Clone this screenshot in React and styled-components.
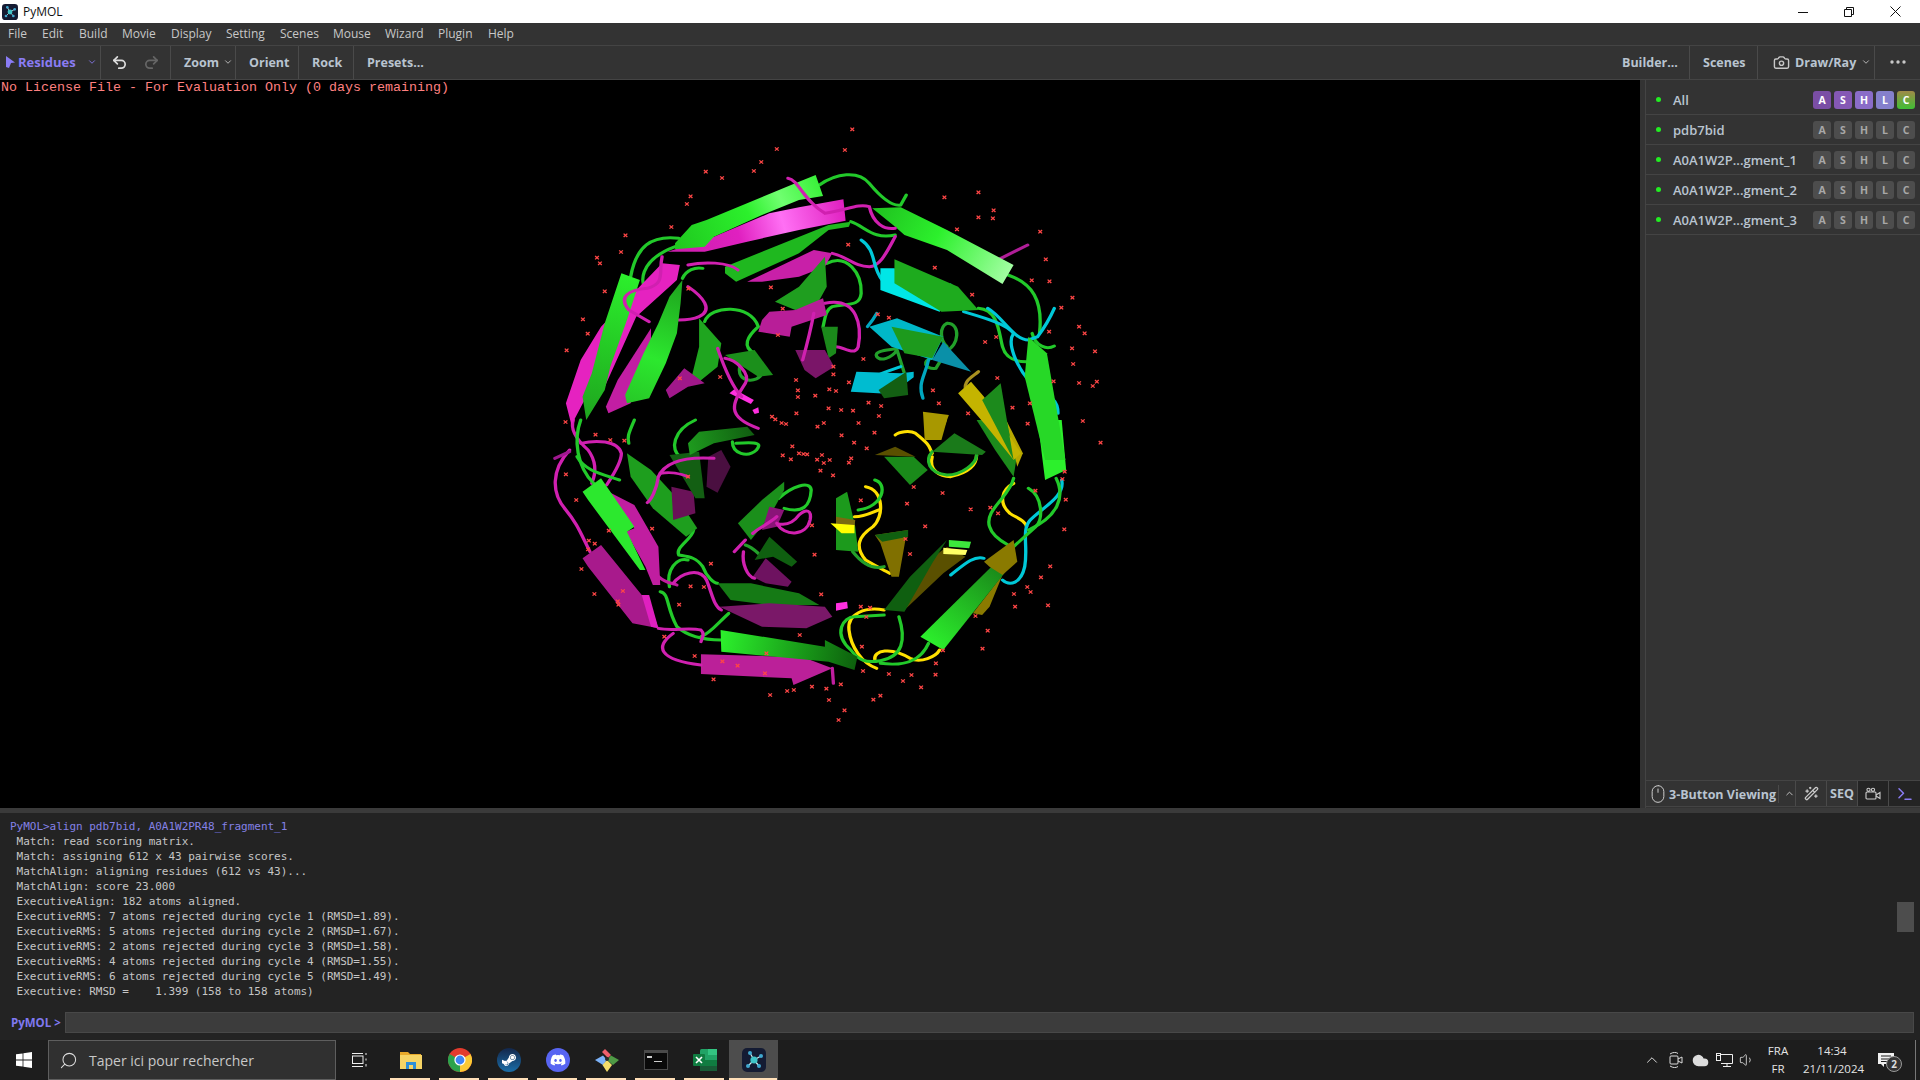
import React from 'react';
import styled, { createGlobalStyle } from 'styled-components';
import {
  ChevronDown, ChevronUp, Undo2, Redo2, Camera, WandSparkles, Mouse, Terminal, Search, Cloud, Volume1,
} from 'lucide-react';
import { FaDiscord, FaSteamSymbol } from 'react-icons/fa';

const GlobalStyle = createGlobalStyle`
  html, body { margin: 0; padding: 0; background: #000; overflow: hidden; }
  * { box-sizing: border-box; }
`;

const UI_FONT = '"Open Sans", "Noto Sans", sans-serif';
const MONO_FONT = '"DejaVu Sans Mono", monospace';

const MENU = [
  ['File', 34], ['Edit', 37], ['Build', 43], ['Movie', 49], ['Display', 55], ['Setting', 54],
  ['Scenes', 53], ['Mouse', 52], ['Wizard', 53], ['Plugin', 50], ['Help', 40],
];

const LOG = [
  ' Match: read scoring matrix.',
  ' Match: assigning 612 x 43 pairwise scores.',
  ' MatchAlign: aligning residues (612 vs 43)...',
  ' MatchAlign: score 23.000',
  ' ExecutiveAlign: 182 atoms aligned.',
  ' ExecutiveRMS: 7 atoms rejected during cycle 1 (RMSD=1.89).',
  ' ExecutiveRMS: 5 atoms rejected during cycle 2 (RMSD=1.67).',
  ' ExecutiveRMS: 2 atoms rejected during cycle 3 (RMSD=1.58).',
  ' ExecutiveRMS: 4 atoms rejected during cycle 4 (RMSD=1.55).',
  ' ExecutiveRMS: 6 atoms rejected during cycle 5 (RMSD=1.49).',
  ' Executive: RMSD =    1.399 (158 to 158 atoms)',
];

const OBJECTS = ['pdb7bid', 'A0A1W2P...gment_1', 'A0A1W2P...gment_2', 'A0A1W2P...gment_3'];
const ALL_COLORS = ['#7a4ea5', '#8558b5', '#8a6cc8', '#8580cc', 'linear-gradient(#a08a48, #3fbf35)'];

/* molecule, traced from crops: TOP is offset at (540,120), BOTTOM at (540,420), x scale .37, y scale .333 */
const TOP_ROPES_BACK = [
  ['#22c92a', 'M755 195C800 160 860 150 890 190C920 230 950 260 975 255L990 225'],
  ['#22c92a', 'M245 470C260 380 300 345 375 355'],
  ['#22c92a', 'M300 530C260 490 270 420 365 380'],
  ['#22c92a', 'M840 305C880 320 900 360 960 345'],
  ['#22c92a', 'M1265 465C1330 490 1360 540 1350 640'],
  ['#22c92a', 'M775 430C830 400 870 460 868 520C865 560 830 550 790 560C770 570 770 600 765 620'],
  ['#22c92a', 'M445 605C460 555 570 550 590 620C560 650 545 680 580 700'],
  ['#22a02a', 'M540 740C530 790 590 790 600 760'],
  ['#22c92a', 'M385 475C395 450 420 440 440 445'],
  ['#22a02a', 'M965 685C950 690 900 690 910 710C920 725 950 715 965 690L985 760'],
  ['#22a02a', 'M1100 610C1140 610 1130 680 1100 690L1070 745C1040 750 1030 720 1060 715'],
  ['#22a02a', 'M1100 610C1080 620 1080 660 1100 680'],
  ['#22c92a', 'M1185 565C1240 570 1240 640 1250 680C1260 720 1290 725 1315 725'],
  ['#22c92a', 'M1330 640C1340 680 1370 690 1390 678'],
  ['#d020b0', 'M960 350C940 390 920 440 890 440C850 440 830 410 790 400'],
  ['#d020b0', 'M400 500C440 530 470 570 430 590C410 600 390 600 375 600'],
  ['#d020b0', 'M770 550C860 530 870 620 860 680C850 710 820 680 800 680'],
  ['#00c8d8', 'M868 360C910 390 895 440 925 480'],
  ['#00c8d8', 'M1145 575C1190 590 1260 610 1280 640C1260 670 1290 740 1320 780'],
  ['#00c8d8', 'M1210 565C1250 590 1280 660 1320 660L1345 650C1365 620 1380 590 1390 565'],
  ['#00a8c0', 'M885 620C900 600 905 590 910 580'],
  ['#00c8d8', 'M975 740C950 750 920 760 905 770'],
  ['#00a8c0', 'M1050 720C1040 770 1020 790 1035 835'],
  ['#00c8d8', 'M1350 815C1380 830 1400 840 1400 880'],
  ['#a89020', 'M1150 810C1145 780 1170 770 1185 755'],
  ['#b01e98', 'M1240 418L1318 375'],
];

const TOP_SHEETS = [
  ['#e522c0', '70,850 110,720 165,620 330,430 378,435 370,480 260,590 175,800 125,830 85,915'],
  ['#c21ea3', '300,625 210,780 178,860 185,880 245,850 300,660'],
  ['url(#leftGreen)', '220,460 270,480 235,600 190,740 175,810 125,900 115,830 140,760 175,610'],
  ['url(#leftGreenTwo)', '350,530 385,480 380,550 370,640 340,730 295,835 235,850 230,825 280,700 320,610'],
  ['url(#topMagenta)', '345,395 470,350 620,280 700,262 820,238 826,302 700,330 560,365 445,395'],
  ['url(#topGreen)', '365,370 410,315 450,300 690,190 745,165 765,228 700,240 600,285 470,350 445,380 365,388'],
  ['#c820a8', '560,485 740,390 790,400 770,440 700,470 600,485'],
  ['#1fb81f', '500,440 780,315 840,305 835,320 780,330 700,400 600,450 530,485 500,460'],
  ['#1f9e1f', '635,545 700,500 770,410 775,500 745,560 690,570'],
  ['#b81e98', '600,600 620,575 690,570 765,535 775,585 680,620 675,650 590,635'],
  ['#1fa51f', '430,595 490,670 480,740 425,790 410,770 430,680'],
  ['#1b8f1b', '500,705 580,690 630,765 590,770'],
  ['#a0188a', '340,810 390,745 445,790 400,800 350,835'],
  ['#1b8a1b', '760,620 805,620 800,700 780,715'],
  ['#7a1568', '690,690 770,690 795,740 745,775 715,750'],
  ['#ff30e0', '512,820 525,808 578,840 570,852'],
  ['#ff30e0', '574,870 590,862 592,878 580,882'],
  ['#00e6e6', '920,445 958,445 1070,540 1110,490 1130,510 1080,575 920,510'],
  ['#1eab1e', '958,418 1130,500 1185,570 1085,575 958,490'],
  ['url(#rightGreen)', '898,265 975,262 1100,330 1280,435 1250,492 1100,390 985,345 960,320'],
  ['#00b8c8', '890,620 965,595 1090,650 1060,720 950,680'],
  ['#0a90a8', '1090,665 1165,755 1060,720'],
  ['#1d9a1d', '950,620 1090,650 1060,715 985,700'],
  ['#00bcd0', '855,755 975,760 1010,755 1010,772 950,822 840,815'],
  ['#135f13', '915,810 990,755 995,825 930,835'],
  ['#c4b400', '1130,820 1165,785 1200,830 1300,1000 1280,1020 1200,910'],
  ['#1c8a1c', '1195,840 1245,790 1280,1020'],
  ['#a89800', '1035,875 1105,885 1080,960 1040,960'],
  ['#27d827', '1320,650 1370,700 1420,1020 1365,1020 1310,770'],
];

const TOP_ROPES_FRONT = [
  ['#d020b0', 'M670 175C700 180 710 240 770 280C830 270 860 250 890 260C900 310 930 330 960 325'],
  ['#d020b0', 'M400 435C440 425 510 425 535 450'],
  ['#d020b0', 'M330 410C320 460 340 490 290 505C240 510 210 530 240 570L295 605'],
  ['#d020b0', 'M480 685C500 750 520 800 545 830'],
  ['#d020b0', 'M500 715C530 720 570 760 555 790C520 850 500 890 590 925'],
  ['#d020b0', 'M740 580C730 640 720 680 710 720'],
];

const BOTTOM_ROPES_BACK = [
  ['#d020b0', 'M80 90C30 150 30 220 70 270C100 310 110 340 135 395'],
  ['#d020b0', 'M110 70C150 60 210 60 220 100C220 130 195 170 180 195'],
  ['#a01890', 'M80 95L40 115'],
  ['#d020b0', 'M90 0C80 30 100 60 130 90C150 120 155 150 140 190'],
  ['#22c92a', 'M110 0C90 60 100 140 145 190'],
  ['#22c92a', 'M100 110C120 150 160 160 215 180'],
  ['#22c92a', 'M255 0C240 40 235 50 240 70'],
  ['#22c92a', 'M415 330C410 360 365 380 375 405C400 410 420 410 440 440C450 470 470 490 480 490'],
  ['#22c92a', 'M400 420C370 410 340 450 350 500'],
  ['#22c92a', 'M325 515C350 520 340 560 370 620C400 650 440 660 490 660'],
  ['#22c92a', 'M510 580C480 610 460 640 435 650'],
  ['#22c92a', 'M420 0C360 30 350 90 380 110'],
  ['#22c92a', 'M520 65C520 100 560 115 585 90C600 70 590 65 530 70'],
  ['#22c92a', 'M645 235C680 200 730 180 733 210C730 260 710 280 660 265'],
  ['#22a02a', 'M555 375C570 380 580 390 590 400'],
  ['#ffe000', 'M880 200C930 210 930 290 900 320C860 350 850 380 880 420C910 440 930 450 945 460'],
  ['#ffe000', 'M850 290C880 290 900 275 920 268'],
  ['#22c92a', 'M905 180C940 190 930 260 860 270'],
  ['#22a02a', 'M845 395C870 430 900 450 930 440'],
  ['#ffe000', 'M1280 190C1245 210 1240 250 1270 280C1290 295 1310 300 1315 320'],
  ['#ffe000', 'M960 45C970 35 1000 30 1015 40C1060 80 1050 80 1060 100'],
  ['#ffe000', 'M1060 110C1050 150 1080 170 1110 170C1150 160 1180 140 1180 105'],
  ['#22b82a', 'M1060 95C1040 120 1050 160 1100 165C1140 165 1180 130 1180 105'],
  ['#ffe000', 'M930 570C880 560 830 580 835 630C840 680 870 730 910 745'],
  ['#ffe000', 'M905 720C900 690 950 680 1000 715C1030 730 1070 710 1080 690'],
  ['#22c92a', 'M970 590C990 660 980 710 920 722C880 730 860 720 840 690C790 640 820 590 850 590L930 585'],
  ['#22c92a', 'M1050 670C1030 720 990 740 920 730'],
  ['#22c92a', 'M1280 175C1270 230 1200 270 1215 320C1220 340 1240 360 1265 375'],
  ['#00c8d8', 'M1410 180C1420 230 1360 260 1325 300C1300 330 1320 380 1310 440C1300 490 1270 500 1250 480'],
  ['#22c92a', 'M1320 205C1360 230 1360 300 1340 320L1280 380'],
  ['#22c92a', 'M1395 175C1420 230 1400 290 1320 330'],
  ['#00c8d8', 'M1110 465C1140 440 1170 405 1200 415'],
];

const BOTTOM_SHEETS = [
  ['#c01ea0', '185,215 255,255 320,380 325,495 305,495 285,440 232,335 255,325'],
  ['#2ce82e', '115,215 165,175 255,320 235,335 285,450 270,450 130,240'],
  ['#a81a8c', '115,415 165,375 275,525 290,525 320,625 250,610 130,440'],
  ['#e020c0', '275,525 295,525 320,625 300,620'],
  ['#1e9e1e', '235,100 300,150 375,240 425,325 395,350 305,265 245,170'],
  ['#6a1258', '355,200 415,215 420,280 360,300'],
  ['#4a0f40', '455,110 490,90 515,140 480,218 450,200'],
  ['#135f13', '350,105 430,95 445,235 420,235'],
  ['url(#tinyGreen)', '400,70 430,35 560,20 580,45 470,70 405,105'],
  ['#1b8f1b', '535,310 600,240 660,185 660,210 620,290 570,360'],
  ['#8a1478', '620,260 660,270 640,320 600,330'],
  ['#0f5f10', '580,420 620,350 695,425 680,440 630,410'],
  ['#6e1260', '575,470 610,415 680,485 670,500 610,490'],
  ['#157a15', '480,490 570,490 700,520 755,555 620,555 515,540'],
  ['#7a1868', '485,560 620,550 770,560 790,590 720,625 600,620'],
  ['#ff30e0', '800,550 830,545 832,565 800,572'],
  ['#bb2099', '435,703 660,710 672,695 790,745 685,795 680,775 435,762'],
  ['url(#bottomGreen)', '488,630 770,680 770,660 858,710 850,750 780,725 490,695'],
  ['#1c9a1c', '800,235 830,215 852,320 860,395 800,390'],
  ['#7a6a10', '800,290 852,300 850,320 800,312'],
  ['#ffff00', '785,310 850,315 850,340 815,340'],
  ['#807000', '905,345 995,330 990,345 970,470 950,470 920,370'],
  ['#106010', '905,345 995,330 995,350 925,365'],
  ['#5a5000', '905,105 960,80 1015,110'],
  ['#1a8a1a', '930,110 1010,110 1048,150 1000,195'],
  ['#a89800', '1040,0 1100,0 1085,60 1040,60'],
  ['#1a7a1a', '1060,95 1120,40 1205,95 1195,105'],
  ['#1c8a1c', '1180,0 1260,0 1290,100 1280,170 1230,90'],
  ['#b8a800', '1260,0 1305,100 1290,140'],
  ['#2cf02c', '1345,0 1410,0 1422,150 1365,180'],
  ['#5a5000', '1040,430 1100,380 1150,410 1090,460 985,570'],
  ['#0f5f10', '930,570 1000,470 1100,360 1060,430 985,575'],
  ['#3ce83c', '1105,360 1165,365 1160,385 1105,380'],
  ['#ffff66', '1090,383 1155,390 1150,405 1090,402'],
  ['#8a7a00', '1170,580 1250,465 1215,560 1195,585'],
  ['url(#lowerGreen)', '1028,650 1220,440 1255,460 1090,690'],
  ['#8a7a00', '1200,425 1280,360 1290,425 1250,465 1215,440'],
];

const BOTTOM_ROPES_FRONT = [
  ['#d020b0', 'M470 115C400 110 340 120 320 170C315 210 300 240 290 248'],
  ['#d020b0', 'M325 160C350 155 380 160 400 170'],
  ['#c01ea0', 'M320 470C340 490 360 490 370 495'],
  ['#d020b0', 'M360 490C380 460 430 440 450 480C465 520 470 560 490 570'],
  ['#d020b0', 'M320 625C360 635 400 620 435 630C445 640 440 650 435 665'],
  ['#d020b0', 'M360 640C310 680 320 720 435 735'],
  ['#d020b0', 'M640 290C620 310 590 325 575 340'],
  ['#d020b0', 'M640 310C660 350 720 350 730 300C735 270 720 265 700 285C690 300 670 320 640 310'],
  ['#d020b0', 'M555 360L525 395'],
  ['#d020b0', 'M550 395C545 430 560 470 580 475'],
  ['#c01ea0', 'M790 745L793 790'],
];

const TOP_CROSSES = [
  [844,28],[640,87],[824,90],[598,126],[578,153],[448,155],[492,174],[1185,217],[1093,232],[1226,271],[1185,292],
  [1224,295],[1127,328],[1352,335],[407,229],[397,252],[355,321],[231,346],[219,396],[154,413],[162,430],[833,374],
  [1367,418],[1067,443],[1329,481],[1377,484],[624,502],[175,514],[401,506],[1168,524],[1439,533],[1409,563],[656,566],
  [913,583],[943,593],[116,598],[129,641],[72,691],[1376,635],[1457,620],[1472,640],[1203,666],[1233,651],[643,645],
  [1438,685],[1500,694],[874,717],[1441,732],[793,740],[793,763],[487,771],[378,775],[692,780],[835,787],[1236,774],
  [1388,784],[1457,789],[1505,785],[1494,798],[697,811],[697,831],[782,808],[800,813],[744,827],[1062,811],[888,848],
  [922,858],[1078,850],[1324,850],[1277,863],[780,865],[814,870],[846,872],[1157,880],[916,888],[693,880],[627,890],
  [636,898],[653,909],[665,912],[750,920],[767,909],[861,909],[1318,911],[1467,903],[69,906],[150,944],[904,938],
  [815,946],[849,968],[883,985],[190,960],[228,962],[682,979],[1515,968],
];

const BOTTOM_CROSSES = [
  [656,106],[700,100],[712,102],[722,103],[762,105],[678,118],[749,119],[841,115],[70,163],[98,240],[303,326],[186,332],
  [132,362],[148,371],[130,388],[112,447],[147,522],[224,513],[210,544],[212,554],[376,554],[407,499],[443,501],[462,431],
  [400,170],[867,241],[735,316],[742,404],[1010,201],[1088,219],[992,251],[1164,268],[1217,263],[1238,280],[1041,319],
  [988,357],[1000,402],[1339,212],[1421,239],[1417,328],[1412,177],[1418,155],[1379,439],[1354,472],[1317,501],[1326,516],
  [1281,522],[1284,560],[1373,556],[1177,588],[1210,632],[1196,686],[1089,691],[1070,730],[1069,764],[1030,802],[1004,765],
  [981,783],[943,762],[873,753],[870,680],[867,560],[892,563],[882,591],[760,523],[702,645],[612,700],[493,724],[534,737],
  [608,760],[418,708],[336,650],[469,778],[622,825],[668,813],[686,810],[735,800],[774,806],[813,793],[781,840],[823,871],
  [807,900],[901,839],[920,827],[792,166],[758,152],[783,120],[767,129],[835,128],
];

const Page = styled.div`
  width: 1920px;
  height: 1080px;
  display: flex;
  flex-direction: column;
  overflow: hidden;
  font-family: ${UI_FONT};
  background: #333;
`;

const TitleBar = styled.div`
  height: 23px;
  background: #fff;
  display: flex;
  align-items: center;
  padding: 0 2px;
  color: #111;
  font-size: 12px;
`;

const TitleText = styled.span`
  margin-left: 5px;
  flex: 1;
`;

const WindowButton = styled.div`
  width: 46px;
  height: 23px;
  display: flex;
  align-items: center;
  justify-content: center;
`;

const MenuBar = styled.div`
  height: 23px;
  background: #333;
  border-bottom: 1px solid #444;
  display: flex;
  align-items: center;
  padding: 0 0 1px 8px;
  color: #c8c8c8;
  font-size: 12px;
`;

const MenuItem = styled.span`
  width: ${(p) => p.$w}px;
`;

const ToolBar = styled.div`
  height: 34px;
  background: #333;
  border-bottom: 1px solid #444;
  display: flex;
  align-items: stretch;
  font-size: 12.5px;
  font-weight: 700;
  color: #b9c4d0;
`;

const ToolSegment = styled.div`
  width: ${(p) => p.$w}px;
  padding-left: ${(p) => p.$pad ?? 13}px;
  padding-bottom: 1px;
  display: flex;
  align-items: center;
  gap: ${(p) => p.$gap ?? 0}px;
  border-right: ${(p) => (p.$plain ? 'none' : '1px solid #4a4a4a')};
`;

const ToolSpacer = styled.div`
  flex: 1;
`;

const ResiduesLabel = styled.span`
  color: #8a7cf4;
  margin-left: 3px;
  font-size: 13px;
`;

const Workspace = styled.div`
  height: 728px;
  display: flex;
`;

const Viewport = styled.div`
  position: relative;
  width: 1640px;
  height: 728px;
  background: #000;
`;

const License = styled.div`
  position: absolute;
  left: 1px;
  top: 1px;
  font-family: "Liberation Mono", monospace;
  font-size: 13.33px;
  line-height: 14px;
  color: #ff8080;
  white-space: pre;
`;

const MoleculeCanvas = styled.svg`
  display: block;
`;

const Gutter = styled.div`
  width: 5px;
  background: #333;
`;

const Side = styled.div`
  width: 275px;
  display: flex;
  flex-direction: column;
  background: #333;
  border-left: 1px solid #444;
`;

const ObjectList = styled.div`
  flex: 1;
`;

const ObjectRow = styled.div`
  height: ${(p) => (p.$first ? 35 : 30)}px;
  padding: ${(p) => (p.$first ? '5px' : '0')} 5px 0 10px;
  border-bottom: 1px solid #444;
  display: flex;
  align-items: center;
`;

const Dot = styled.span`
  width: 5px;
  height: 5px;
  border-radius: 50%;
  background: #22ee22;
`;

const ObjectName = styled.span`
  flex: 1;
  margin-left: 12px;
  padding-top: 1px;
  font-size: 13px;
  font-weight: 600;
  color: #b9c4d0;
  white-space: nowrap;
`;

const ButtonGroup = styled.div`
  display: flex;
  gap: 3px;
`;

const MiniButton = styled.div`
  width: 18px;
  height: 18px;
  border-radius: 3px;
  background: ${(p) => p.$bg || '#4d4d4d'};
  color: ${(p) => (p.$bg ? '#fff' : '#a8a8a8')};
  font-size: 10.5px;
  font-weight: 700;
  display: flex;
  align-items: center;
  justify-content: center;
`;

const SideFooter = styled.div`
  height: 27px;
  border-top: 1px solid #444;
  border-bottom: 1px solid #444;
  display: flex;
  align-items: stretch;
  margin-bottom: 1px;
  font-size: 12.5px;
  font-weight: 700;
  color: #b9c4d0;
`;

const FooterCell = styled.div`
  width: ${(p) => p.$w}px;
  border-right: ${(p) => (p.$last ? 'none' : '1px solid #4a4a4a')};
  background: ${(p) => (p.$dark ? '#242424' : 'transparent')};
  display: flex;
  align-items: center;
  justify-content: ${(p) => (p.$left ? 'flex-start' : 'center')};
  padding-left: ${(p) => (p.$left ? 2 : 0)}px;
  white-space: nowrap;
`;

const FooterLabel = styled.span`
  margin-left: 1px;
  width: 110px;
  border-right: 1px solid #4a4a4a;
  padding-top: 1px;
`;

const Strip = styled.div`
  height: 5px;
  background: #3a3a3a;
`;

const ConsolePanel = styled.div`
  position: relative;
  height: 227px;
  background: #232323;
  display: flex;
  flex-direction: column;
`;

const Log = styled.div`
  height: 188px;
  padding: 6px 0 0 10px;
  overflow: hidden;
  font-family: ${MONO_FONT};
  font-size: 11px;
  line-height: 15px;
  letter-spacing: -0.02px;
  color: #c6c6c6;
  white-space: pre;
`;

const CommandEcho = styled.div`
  color: #8481e6;
`;

const ScrollThumb = styled.div`
  position: absolute;
  right: 6px;
  top: 89px;
  width: 17px;
  height: 30px;
  background: #4d4d4d;
`;

const PromptRow = styled.div`
  margin-top: 11px;
  height: 21px;
  display: flex;
  align-items: center;
  padding: 0 6px 0 11px;
`;

const PromptLabel = styled.span`
  width: 54px;
  color: #7f78f0;
  font-size: 11.5px;
  font-weight: 700;
`;

const PromptInput = styled.div`
  flex: 1;
  height: 21px;
  background: #3c3c3c;
  border: 1px solid #484848;
`;

const Taskbar = styled.div`
  height: 40px;
  background: #1d1d1d;
  display: flex;
  align-items: stretch;
  color: #e4e4e4;
`;

const StartButton = styled.div`
  width: 48px;
  display: flex;
  align-items: center;
  justify-content: center;
`;

const SearchBox = styled.div`
  width: 288px;
  background: #303030;
  border: 1px solid #5e5e5e;
  display: flex;
  align-items: center;
  padding-left: 10px;
  gap: 11px;
  color: #c8c8c8;
  font-size: 14px;
`;

const MirroredIcon = styled.span`
  display: flex;
  transform: scaleX(-1);
`;

const TaskView = styled.div`
  width: 50px;
  display: flex;
  align-items: center;
  justify-content: center;
  padding-right: 3px;
`;

const AppButton = styled.div`
  position: relative;
  width: 49px;
  display: flex;
  align-items: center;
  justify-content: center;
  background: ${(p) => (p.$active ? '#4d4d4d' : 'transparent')};

  &::after {
    content: '';
    position: absolute;
    left: ${(p) => (p.$active ? 0 : 4)}px;
    right: ${(p) => (p.$active ? 1 : 5)}px;
    bottom: 0;
    height: 2px;
    background: #ffdfb8;
  }
`;

const RoundApp = styled.div`
  width: 24px;
  height: 24px;
  border-radius: 50%;
  background: ${(p) => p.$bg};
  color: #fff;
  display: flex;
  align-items: center;
  justify-content: center;
`;

const TaskSpacer = styled.div`
  flex: 1;
`;

const TrayIcon = styled.div`
  width: ${(p) => p.$w}px;
  display: flex;
  align-items: center;
  justify-content: center;
`;

const TrayText = styled.div`
  width: ${(p) => p.$w}px;
  padding: 2px 0 0 ${(p) => p.$pl || 0}px;
  font-size: 11.5px;
  line-height: 18px;
  text-align: center;
  white-space: nowrap;
`;

const NoticeButton = styled.div`
  position: relative;
  width: 54px;
  padding-right: 4px;
  display: flex;
  align-items: center;
  justify-content: center;
`;

const NoticeBadge = styled.span`
  position: absolute;
  left: 25px;
  top: 16px;
  width: 16px;
  height: 16px;
  border-radius: 50%;
  background: #333;
  border: 1px solid #999;
  font-size: 10px;
  font-weight: 700;
  line-height: 14px;
  text-align: center;
  color: #ddd;
`;

const DesktopEdge = styled.div`
  width: 1px;
  background: #777;
  margin-right: 4px;
`;

const PymolLogo = ({ size }) => (
  <svg width={size} height={size} viewBox="0 0 24 24">
    <rect width="24" height="24" rx="5" fill="#141b33" />
    <path d="M8 5L12 12L19 8M6 18L12 12L17 18" stroke="#cfeef2" strokeWidth="1.2" fill="none" />
    <circle cx="12" cy="12" r="3.6" fill="#3fc4c8" />
    <circle cx="8" cy="5" r="2" fill="#3fa8d0" />
    <circle cx="19" cy="8" r="2" fill="#3fa8d0" />
    <circle cx="6" cy="18" r="2" fill="#3fa8d0" />
    <circle cx="17" cy="18" r="2" fill="#3fa8d0" />
  </svg>
);

const ArrowCursor = () => (
  <svg width="9" height="12" viewBox="0 0 9 12">
    <path d="M0 0L9 6.5L5 7L3 12L0 11Z" fill="#8a7cf4" />
  </svg>
);

const WinMin = () => (
  <svg width="10" height="10"><path d="M0 5.5H10" stroke="#111" /></svg>
);
const WinRestore = () => (
  <svg width="10" height="10" fill="none" stroke="#111">
    <path d="M0.5 2.5H7.5V9.5H0.5Z" />
    <path d="M2.5 2.5V0.5H9.5V7.5H7.5" />
  </svg>
);
const WinClose = () => (
  <svg width="11" height="11" stroke="#111"><path d="M0.5 0.5L10.5 10.5M10.5 0.5L0.5 10.5" /></svg>
);

const ThreeDots = () => (
  <svg width="16" height="4" fill="#c8c8c8">
    <circle cx="2" cy="2" r="1.7" /><circle cx="8" cy="2" r="1.7" /><circle cx="14" cy="2" r="1.7" />
  </svg>
);

const MovieCam = () => (
  <svg width="16" height="14" viewBox="0 0 16 14" fill="none" stroke="#ccc" strokeWidth="1.1">
    <rect x="1" y="5" width="10" height="7" rx="1" />
    <circle cx="3.5" cy="2.8" r="1.6" /><circle cx="8" cy="2.8" r="1.6" />
    <path d="M11 8L15 5.5V11.5L11 9" />
  </svg>
);

const WindowsLogo = () => (
  <svg width="16" height="16" viewBox="0 0 16 16" fill="#fff">
    <path d="M0 2.3L6.6 1.4V7.6H0ZM7.4 1.3L16 0V7.6H7.4ZM0 8.4H6.6V14.6L0 13.7ZM7.4 8.4H16V16L7.4 14.7Z" />
  </svg>
);

const TaskViewIcon = () => (
  <svg width="16" height="16" viewBox="0 0 16 16" fill="none" stroke="#eee">
    <rect x="0.5" y="4" width="10.5" height="7.5" />
    <path d="M0 1.5H11M0 14.5H11M14 1V3M14 6.5V8.5M14 12V14.5" />
  </svg>
);

const FolderIcon = () => (
  <svg width="22" height="20" viewBox="0 0 22 20">
    <path d="M0 2H8L10 4H21V18H0Z" fill="#e8a92a" />
    <rect y="5" width="22" height="14" fill="#f6d465" />
    <path d="M6 19V12H16V19H13V15H9V19Z" fill="#2e8fd8" />
  </svg>
);

const ChromeIcon = () => (
  <svg width="24" height="24" viewBox="0 0 24 24">
    <circle cx="12" cy="12" r="12" fill="#e33b2e" />
    <path d="M12 12L1.6 6A12 12 0 0 0 12 24Z" fill="#2ba24c" />
    <path d="M12 12L12 24A12 12 0 0 0 22.4 6Z" fill="#fcc934" />
    <circle cx="12" cy="12" r="5.6" fill="#fff" />
    <circle cx="12" cy="12" r="4.4" fill="#3f85f4" />
  </svg>
);

const GitIcon = () => (
  <svg width="24" height="24" viewBox="0 0 24 24">
    <path d="M8 7.5L0 12L8 17L12 12Z" fill="#7cb2f8" />
    <path d="M7 4L10 1L16 7L13 10Z" fill="#ef5f6b" />
    <path d="M12 12L16 7.5L24 12L18 17Z" fill="#4f9a45" />
    <path d="M7.5 17L12 12L17 17L12 24Z" fill="#f5de6b" />
    <circle cx="12" cy="11" r="2" fill="#2a2a2a" />
  </svg>
);

const CmdIcon = () => (
  <svg width="24" height="20" viewBox="0 0 24 20">
    <rect width="24" height="20" fill="#4a4a4a" />
    <rect x="1" y="3" width="22" height="16" fill="#0a0a0a" />
    <path d="M3 6H8V8H3ZM10 11H18V12H10Z" fill="#ccc" />
  </svg>
);

const ExcelIcon = () => (
  <svg width="24" height="22" viewBox="0 0 24 22">
    <rect x="7" width="17" height="22" rx="1.5" fill="#21a366" />
    <rect x="15" width="9" height="6" fill="#33c481" />
    <rect x="7" y="11" width="17" height="6" fill="#107c41" />
    <rect x="7" y="17" width="17" height="5" fill="#185c37" />
    <rect y="5" width="12" height="12" rx="1" fill="#107c41" />
    <path d="M3 8L9 14M9 8L3 14" stroke="#fff" strokeWidth="1.6" />
  </svg>
);

const MeetIcon = () => (
  <svg width="16" height="16" viewBox="0 0 16 16" fill="none" stroke="#ddd">
    <rect x="2" y="4" width="8" height="8" rx="1" />
    <path d="M10 7L14 5V11L10 9M2 2C5 0 8 0 10 1.5M2 14C5 16 8 16 10 14.5" />
  </svg>
);

const NetworkIcon = () => (
  <svg width="17" height="14" viewBox="0 0 17 14" fill="none" stroke="#eee">
    <path d="M5 1.5H16.5V10.5H5M11 10.5V13M7 13.5H15" />
    <rect x="0.5" y="0.5" width="4" height="7" fill="#1d1d1d" />
    <path d="M1 2.5H4" />
  </svg>
);

const NoticeIcon = () => (
  <svg width="16" height="16" viewBox="0 0 16 16" fill="#f0f0f0">
    <path d="M0 1H16V12H6V15L3 12H0Z" />
    <path d="M3 4H13M3 7H13M3 9.5H10" stroke="#1d1d1d" />
  </svg>
);

const Ropes = ({ list }) => (
  <g fill="none" strokeWidth="9" strokeLinecap="round">
    {list.map(([color, d], i) => <path key={i} d={d} stroke={color} />)}
  </g>
);

const Sheets = ({ list }) => (
  <g>
    {list.map(([fill, points], i) => <polygon key={i} points={points} fill={fill} />)}
  </g>
);

const Crosses = ({ list }) => (
  <g stroke="#ff4646" strokeWidth="3.6" fill="none">
    {list.map(([x, y], i) => <path key={i} d={`M${x - 5} ${y - 5}L${x + 5} ${y + 5}M${x + 5} ${y - 5}L${x - 5} ${y + 5}`} />)}
  </g>
);

const Gradient = ({ id, x1, y1, x2, y2, stops }) => (
  <linearGradient id={id} gradientUnits="userSpaceOnUse" x1={x1} y1={y1} x2={x2} y2={y2}>
    {stops.map(([offset, color]) => <stop key={offset} offset={offset} stopColor={color} />)}
  </linearGradient>
);

const Molecule = () => (
  <MoleculeCanvas width="1640" height="728" viewBox="0 80 1640 728">
    <defs>
      <Gradient id="topGreen" x1="365" y1="380" x2="765" y2="190" stops={[[0, '#1fc81f'], [0.5, '#2cf02c'], [0.72, '#70ff70'], [1, '#36f036']]} />
      <Gradient id="topMagenta" x1="345" y1="395" x2="826" y2="270" stops={[[0, '#c81ea8'], [0.4, '#e020c0'], [0.65, '#ff70f4'], [1, '#e020c0']]} />
      <Gradient id="rightGreen" x1="900" y1="265" x2="1280" y2="460" stops={[[0, '#1fc01f'], [0.45, '#2cf02c'], [1, '#a8ffa8']]} />
      <Gradient id="leftGreen" x1="240" y1="460" x2="130" y2="880" stops={[[0, '#2cf02c'], [1, '#1fa81f']]} />
      <Gradient id="leftGreenTwo" x1="370" y1="500" x2="240" y2="850" stops={[[0, '#1fa81f'], [0.6, '#2ce82e'], [1, '#27c827']]} />
      <Gradient id="bottomGreen" x1="488" y1="660" x2="858" y2="720" stops={[[0, '#2cf02c'], [0.55, '#1aa01a'], [1, '#0d5f0d']]} />
      <Gradient id="lowerGreen" x1="1050" y1="670" x2="1240" y2="450" stops={[[0, '#2cf02c'], [1, '#1a8a1a']]} />
      <Gradient id="tinyGreen" x1="400" y1="70" x2="580" y2="30" stops={[[0, '#1e9a1e'], [1, '#105c10']]} />
    </defs>
    <g transform="translate(540 420) scale(0.37 0.33333)">
      <Ropes list={BOTTOM_ROPES_BACK} />
      <Sheets list={BOTTOM_SHEETS} />
      <Ropes list={BOTTOM_ROPES_FRONT} />
    </g>
    <g transform="translate(540 120) scale(0.37 0.33333)">
      <Ropes list={TOP_ROPES_BACK} />
      <Sheets list={TOP_SHEETS} />
      <Ropes list={TOP_ROPES_FRONT} />
      <Crosses list={TOP_CROSSES} />
    </g>
    <g transform="translate(540 420) scale(0.37 0.33333)">
      <Crosses list={BOTTOM_CROSSES} />
    </g>
  </MoleculeCanvas>
);

const LetterButtons = ({ colors }) => (
  <ButtonGroup>
    {['A', 'S', 'H', 'L', 'C'].map((letter, i) => (
      <MiniButton key={letter} $bg={colors && colors[i]}>{letter}</MiniButton>
    ))}
  </ButtonGroup>
);

export default function App() {
  return (
    <Page>
      <GlobalStyle />
      <TitleBar>
        <PymolLogo size={16} />
        <TitleText>PyMOL</TitleText>
        <WindowButton><WinMin /></WindowButton>
        <WindowButton><WinRestore /></WindowButton>
        <WindowButton><WinClose /></WindowButton>
      </TitleBar>

      <MenuBar>
        {MENU.map(([name, w]) => <MenuItem key={name} $w={w}>{name}</MenuItem>)}
      </MenuBar>

      <ToolBar>
        <ToolSegment $w={101} $pad={6}>
          <ArrowCursor />
          <ResiduesLabel>Residues</ResiduesLabel>
          <ChevronDown size={10} color="#8a7cf4" style={{ marginLeft: 11 }} />
        </ToolSegment>
        <ToolSegment $w={70} $pad={10} $gap={15}>
          <Undo2 size={17} color="#ddd" strokeWidth={2.4} />
          <Redo2 size={17} color="#666" strokeWidth={2.4} />
        </ToolSegment>
        <ToolSegment $w={65} $gap={4}>
          Zoom <ChevronDown size={10} color="#ccc" />
        </ToolSegment>
        <ToolSegment $w={63}>Orient</ToolSegment>
        <ToolSegment $w={55}>Rock</ToolSegment>
        <ToolSegment $w={100} $plain>Presets...</ToolSegment>
        <ToolSpacer />
        <ToolSegment $w={68} $pad={0}>Builder...</ToolSegment>
        <ToolSegment $w={68}>Scenes</ToolSegment>
        <ToolSegment $w={117} $pad={15} $gap={5}>
          <Camera size={17} color="#c8c8c8" />
          Draw/Ray
          <ChevronDown size={10} color="#ccc" />
        </ToolSegment>
        <ToolSegment $w={45} $pad={15} $plain><ThreeDots /></ToolSegment>
      </ToolBar>

      <Workspace>
        <Viewport>
          <Molecule />
          <License>No License File - For Evaluation Only (0 days remaining)</License>
        </Viewport>
        <Gutter />
        <Side>
          <ObjectList>
            <ObjectRow $first>
              <Dot />
              <ObjectName>All</ObjectName>
              <LetterButtons colors={ALL_COLORS} />
            </ObjectRow>
            {OBJECTS.map((name) => (
              <ObjectRow key={name}>
                <Dot />
                <ObjectName>{name}</ObjectName>
                <LetterButtons />
              </ObjectRow>
            ))}
          </ObjectList>
          <SideFooter>
            <FooterCell $w={150} $left>
              <Mouse size={20} color="#ccc" strokeWidth={1.2} />
              <FooterLabel>3-Button Viewing</FooterLabel>
              <ChevronUp size={11} color="#ccc" style={{ marginLeft: 5 }} />
            </FooterCell>
            <FooterCell $w={31}><WandSparkles size={15} color="#ccc" /></FooterCell>
            <FooterCell $w={31}>SEQ</FooterCell>
            <FooterCell $w={31} $dark><MovieCam /></FooterCell>
            <FooterCell $w={31} $dark $last><Terminal size={18} color="#8a7cf4" /></FooterCell>
          </SideFooter>
        </Side>
      </Workspace>

      <Strip />

      <ConsolePanel>
        <Log>
          <CommandEcho>PyMOL&gt;align pdb7bid, A0A1W2PR48_fragment_1</CommandEcho>
          {LOG.map((line) => <div key={line}>{line}</div>)}
        </Log>
        <ScrollThumb />
        <PromptRow>
          <PromptLabel>PyMOL &gt;</PromptLabel>
          <PromptInput />
        </PromptRow>
      </ConsolePanel>

      <Taskbar>
        <StartButton><WindowsLogo /></StartButton>
        <SearchBox>
          <MirroredIcon><Search size={19} color="#ddd" strokeWidth={1.3} /></MirroredIcon>
          Taper ici pour rechercher
        </SearchBox>
        <TaskView><TaskViewIcon /></TaskView>
        <AppButton><FolderIcon /></AppButton>
        <AppButton><ChromeIcon /></AppButton>
        <AppButton><RoundApp $bg="linear-gradient(#13264a, #1a6ea8)"><FaSteamSymbol size={16} /></RoundApp></AppButton>
        <AppButton><RoundApp $bg="#5865f2"><FaDiscord size={16} /></RoundApp></AppButton>
        <AppButton><GitIcon /></AppButton>
        <AppButton><CmdIcon /></AppButton>
        <AppButton><ExcelIcon /></AppButton>
        <AppButton $active><PymolLogo size={24} /></AppButton>
        <TaskSpacer />
        <TrayIcon $w={24}><ChevronUp size={18} color="#ddd" strokeWidth={1.3} /></TrayIcon>
        <TrayIcon $w={24}><MeetIcon /></TrayIcon>
        <TrayIcon $w={24}><Cloud size={17} color="#ddd" fill="#ddd" /></TrayIcon>
        <TrayIcon $w={24}><NetworkIcon /></TrayIcon>
        <TrayIcon $w={22}><Volume1 size={16} color="#ddd" strokeWidth={1.3} /></TrayIcon>
        <TrayText $w={40}>FRA<br />FR</TrayText>
        <TrayText $w={63} $pl={5}>14:34<br />21/11/2024</TrayText>
        <NoticeButton>
          <NoticeIcon />
          <NoticeBadge>2</NoticeBadge>
        </NoticeButton>
        <DesktopEdge />
      </Taskbar>
    </Page>
  );
}
